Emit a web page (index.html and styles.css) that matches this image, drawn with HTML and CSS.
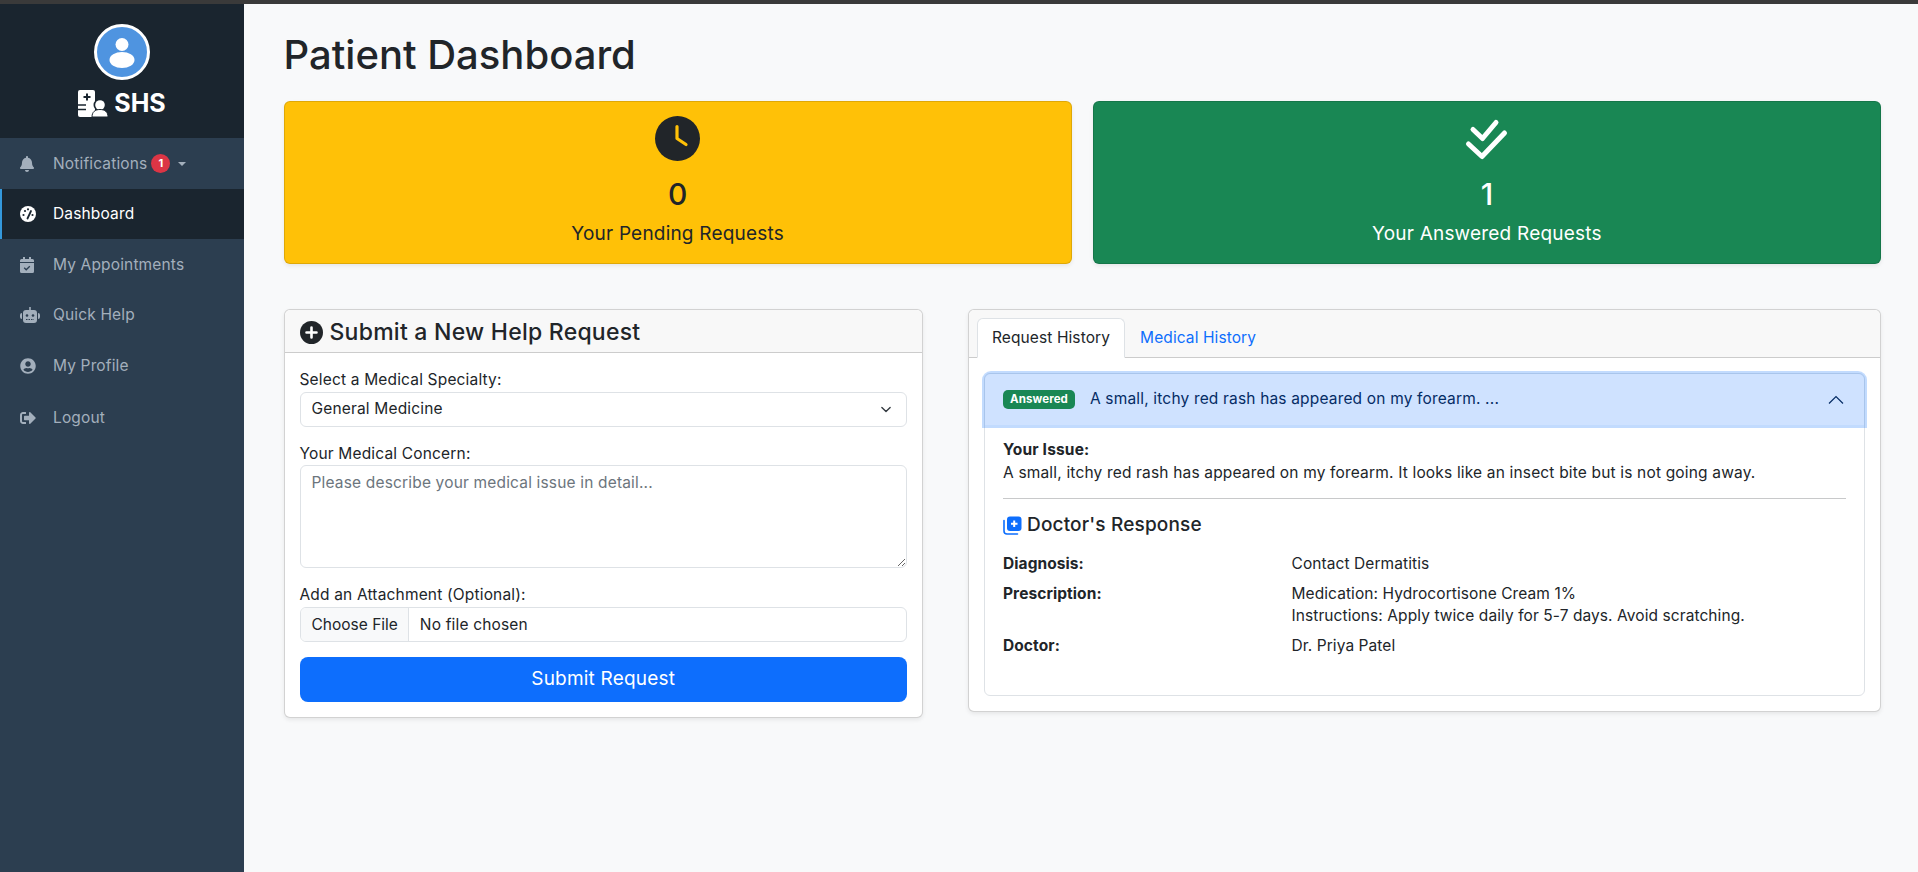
FILE: index.html
```html
<!DOCTYPE html>
<html lang="en">
<head>
    <meta charset="UTF-8" />
    <title>Patient Dashboard</title>
    <link rel="stylesheet" href="styles.css">
</head>
<body>
    <div class="top-strip"></div>
    <div class="layout">
        <aside class="sidebar">
            <div class="sidebar-head">
                <div class="avatar">
                    <svg viewBox="0 0 50 50" width="50" height="50"><circle cx="25" cy="17.5" r="6.5" fill="#fff"/><ellipse cx="25" cy="33" rx="12.5" ry="8" fill="#fff"/></svg>
                </div>
                <div class="brand">
                    <svg viewBox="0 0 30 27" width="30" height="27">
                        <path d="M2 0h13a2 2 0 0 1 2 2v25H2a2 2 0 0 1-2-2V2a2 2 0 0 1 2-2z" fill="#fff"/>
                        <path d="M9 3.5v7M5.5 7h7" stroke="#1a252f" stroke-width="2"/>
                        <path d="M0 15h8M0 19.5h8" stroke="#1a252f" stroke-width="1.5"/>
                        <circle cx="22" cy="15" r="6.5" fill="#1a252f"/>
                        <circle cx="22" cy="15" r="4.8" fill="#fff"/>
                        <path d="M14 27c0-5 3-7.5 8-7.5s8 2.500 8 7.500z" fill="#fff" stroke="#1a252f" stroke-width="1"/>
                    </svg>
                    <span>SHS</span>
                </div>
            </div>
            <nav class="side-nav">
                <a class="nav-item" href="#">
                    <span class="nav-icon"><svg viewBox="0 0 448 512" width="14" height="16"><path fill="currentColor" d="M224 512c35.32 0 63.97-28.65 63.97-64H160.03c0 35.35 28.65 64 63.97 64zm215.39-149.71c-19.32-20.76-55.47-51.99-55.47-154.29 0-77.7-54.48-139.9-127.94-155.16V32c0-17.67-14.32-32-31.98-32s-31.98 14.33-31.98 32v20.84C118.56 68.1 64.08 130.3 64.08 208c0 102.3-36.15 133.53-55.47 154.29-6 6.45-8.66 14.16-8.61 21.71.11 16.4 12.98 32 32.1 32h383.8c19.12 0 32-15.6 32.1-32 .05-7.55-2.61-15.27-8.61-21.71z"/></svg></span>
                    Notifications
                    <span class="count-badge">1</span>
                    <span class="caret"></span>
                </a>
                <a class="nav-item active" href="#">
                    <span class="nav-icon"><svg viewBox="0 0 16 16" width="16" height="16"><circle cx="8" cy="8" r="8" fill="#fff"/><circle cx="3.5" cy="9" r="1.100" fill="#1a252f"/><circle cx="5" cy="5" r="1.100" fill="#1a252f"/><circle cx="8" cy="3.300" r="1.100" fill="#1a252f"/><circle cx="12.500" cy="9" r="1.100" fill="#1a252f"/><path d="M7.500 12.500L11 5" stroke="#1a252f" stroke-width="1.800" stroke-linecap="round"/></svg></span>
                    Dashboard
                </a>
                <a class="nav-item" href="#">
                    <span class="nav-icon"><svg viewBox="0 0 14 16" width="14" height="16"><path fill="currentColor" d="M3 0h2v2h4V0h2v2h1.500A1.500 1.500 0 0 1 14 3.500V5H0V3.500A1.500 1.500 0 0 1 1.500 2H3zM0 6h14v8.500a1.500 1.500 0 0 1-1.500 1.500h-11A1.500 1.500 0 0 1 0 14.500z"/><path d="M4.200 10.800l2 2 3.600-3.600" fill="none" stroke="#2c3e50" stroke-width="1.300"/></svg></span>
                    My Appointments
                </a>
                <a class="nav-item" href="#">
                    <span class="nav-icon"><svg viewBox="0 0 20 16" width="20" height="16"><path fill="currentColor" d="M9.200 0h1.600v3H9.200zM6 3h8a3 3 0 0 1 3 3v7a3 3 0 0 1-3 3H6a3 3 0 0 1-3-3V6a3 3 0 0 1 3-3zM0 8a2 2 0 0 1 2-2v6a2 2 0 0 1-2-2zM18 6a2 2 0 0 1 2 2v2a2 2 0 0 1-2 2z"/><circle cx="7" cy="8.500" r="1.300" fill="#2c3e50"/><circle cx="13" cy="8.500" r="1.300" fill="#2c3e50"/><path d="M6 12.500h8" stroke="#2c3e50" stroke-width="1" stroke-dasharray="1.500 1"/></svg></span>
                    Quick Help
                </a>
                <a class="nav-item" href="#">
                    <span class="nav-icon"><svg viewBox="0 0 496 512" width="16" height="16"><path fill="currentColor" d="M248 8C111 8 0 119 0 256s111 248 248 248 248-111 248-248S385 8 248 8zm0 96c48.600 0 88 39.400 88 88s-39.400 88-88 88-88-39.400-88-88 39.400-88 88-88zm0 344c-58.700 0-111.300-26.600-146.500-68.200 18.800-35.400 55.600-59.800 98.500-59.800 2.400 0 4.800.4 7.100 1.100 13 4.200 26.600 6.900 40.900 6.900 14.300 0 28-2.700 40.900-6.900 2.300-.7 4.700-1.100 7.100-1.100 42.900 0 79.700 24.400 98.500 59.800C359.300 421.400 306.700 448 248 448z"/></svg></span>
                    My Profile
                </a>
                <a class="nav-item nav-logout" href="#">
                    <span class="nav-icon"><svg viewBox="0 0 512 512" width="16" height="16"><path fill="currentColor" d="M497 273L329 441c-15 15-41 4.500-41-17v-96H152c-13.300 0-24-10.700-24-24v-96c0-13.300 10.700-24 24-24h136V88c0-21.400 25.900-32 41-17l168 168c9.300 9.400 9.300 24.600 0 34zM192 436v-40c0-6.600-5.400-12-12-12H96c-17.700 0-32-14.300-32-32V160c0-17.700 14.300-32 32-32h84c6.600 0 12-5.400 12-12V76c0-6.600-5.400-12-12-12H96c-53 0-96 43-96 96v192c0 53 43 96 96 96h84c6.600 0 12-5.400 12-12z"/></svg></span>
                    Logout
                </a>
            </nav>
        </aside>

        <main class="main">
            <h1 class="page-title">Patient Dashboard</h1>

            <div class="stat-row">
                <div class="stat-card stat-pending">
                    <svg viewBox="0 0 45 45" width="45" height="45"><circle cx="22.500" cy="22.500" r="22.500" fill="#212529"/><path d="M22 10.500V22.500L31 28.500" fill="none" stroke="#ffc107" stroke-width="3.200" stroke-linecap="round" stroke-linejoin="round"/></svg>
                    <div class="stat-number">0</div>
                    <div class="stat-label">Your Pending Requests</div>
                </div>
                <div class="stat-card stat-answered">
                    <svg viewBox="0 0 45 45" width="45" height="45"><path d="M9 13.500l9.500 9L32 6.500M4.500 28l13.500 12.500L40.500 17" fill="none" stroke="#fff" stroke-width="5" stroke-linecap="round" stroke-linejoin="round"/></svg>
                    <div class="stat-number">1</div>
                    <div class="stat-label">Your Answered Requests</div>
                </div>
            </div>

            <div class="panel-row">
                <section class="card">
                    <div class="card-head">
                        <h2 class="card-title">
                            <svg viewBox="0 0 23 23" width="23" height="23"><circle cx="11.500" cy="11.500" r="11.500" fill="#212529"/><path d="M11.500 6.500v10M6.500 11.500h10" stroke="#fff" stroke-width="2.600" stroke-linecap="round"/></svg>
                            Submit a New Help Request
                        </h2>
                    </div>
                    <form class="card-body">
                        <div class="form-group">
                            <label for="specialty">Select a Medical Specialty:</label>
                            <select id="specialty" class="form-control form-select">
                                <option>General Medicine</option>
                            </select>
                        </div>
                        <div class="form-group">
                            <label for="concern">Your Medical Concern:</label>
                            <textarea id="concern" class="form-control form-text" placeholder="Please describe your medical issue in detail..."></textarea>
                        </div>
                        <div class="form-group">
                            <label for="attachment">Add an Attachment (Optional):</label>
                            <input id="attachment" type="file" class="form-control form-file" />
                        </div>
                        <button type="button" class="submit-btn">Submit Request</button>
                    </form>
                </section>

                <section class="card">
                    <div class="card-head tabs-head">
                        <a class="tab active" href="#">Request History</a>
                        <a class="tab" href="#">Medical History</a>
                    </div>
                    <div class="card-body">
                        <div class="accordion">
                            <div class="accordion-btn">
                                <span class="status-badge">Answered</span>
                                <span class="accordion-text">A small, itchy red rash has appeared on my forearm. ...</span>
                                <svg class="chevron" viewBox="0 0 16 16" width="16" height="16"><path d="M1 11.500l7-7 7 7" fill="none" stroke="#052c65" stroke-width="1.200"/></svg>
                            </div>
                            <div class="accordion-body">
                                <strong>Your Issue:</strong>
                                <p class="issue-text">A small, itchy red rash has appeared on my forearm. It looks like an insect bite but is not going away.</p>
                                <hr />
                                <h3 class="response-title">
                                    <svg viewBox="0 0 19 19" width="19" height="19"><path d="M1 4.500V15a3 3 0 0 0 3 3h10.500" fill="none" stroke="#0d6efd" stroke-width="1.600" stroke-linecap="round"/><rect x="4" y="0.500" width="14.500" height="14.500" rx="3" fill="#0d6efd"/><path d="M11.200 4.500v6.500M8 7.750h6.500" stroke="#fff" stroke-width="2"/></svg>
                                    Doctor's Response
                                </h3>
                                <dl class="detail-grid">
                                    <dt>Diagnosis:</dt>
                                    <dd>Contact Dermatitis</dd>
                                    <dt>Prescription:</dt>
                                    <dd>Medication: Hydrocortisone Cream 1%<br />Instructions: Apply twice daily for 5-7 days. Avoid scratching.</dd>
                                    <dt>Doctor:</dt>
                                    <dd>Dr. Priya Patel</dd>
                                </dl>
                            </div>
                        </div>
                    </div>
                </section>
            </div>
        </main>
    </div>
</body>
</html>
```

FILE: styles.css
```css
* {
    box-sizing: border-box;
}

body {
    margin: 0;
    font-family: Inter, 'Noto Sans', sans-serif;
    font-size: 15.5px;
    letter-spacing: .17px;
    line-height: 22.5px;
    color: #212529;
    background-color: #f8f9fa;
}

.top-strip {
    height: 4px;
    background-color: #3a3a3a;
}

.layout {
    display: flex;
    height: 868px;
}

/* sidebar */
.sidebar {
    width: 244px;
    flex-shrink: 0;
    background-color: #2c3e50;
}

.sidebar-head {
    height: 134px;
    padding-top: 20px;
    background-color: #1a252f;
    display: flex;
    flex-direction: column;
    align-items: center;
}

.avatar {
    width: 56px;
    height: 56px;
    border: 3px solid #fff;
    border-radius: 50%;
    background-color: #4f94e0;
}

.avatar svg {
    display: block;
}

.brand {
    display: flex;
    align-items: center;
    gap: 6px;
    margin-top: 10px;
    color: #fff;
    font-size: 25px;
    font-weight: 700;
    letter-spacing: 0;
    line-height: 27px;
}

.nav-item {
    display: flex;
    align-items: center;
    height: 50.5px;
    padding-left: 20px;
    padding-top: 1px;
    color: #a3afbc;
    font-size: 15.5px;
    letter-spacing: .15px;
    text-decoration: none;
}

.nav-item.active {
    padding-left: 18px;
    padding-top: 0;
    border-left: 2px solid #3498db;
    background-color: #1a252f;
    color: #fff;
}

.nav-logout {
    height: 52.5px;
    padding-top: 2px;
}

.nav-icon {
    width: 33px;
    display: flex;
    align-items: center;
}

.count-badge {
    width: 19px;
    height: 19px;
    margin-left: 4px;
    border-radius: 50%;
    background-color: #dc3545;
    color: #fff;
    font-size: 11px;
    font-weight: 700;
    letter-spacing: 0;
    line-height: 19px;
    text-align: center;
}

.caret {
    margin-left: 8px;
    border-top: 4.500px solid;
    border-left: 4.500px solid transparent;
    border-right: 4.500px solid transparent;
}

/* main */
.main {
    flex: 1;
    padding: 21px 37px 0 39.5px;
}

.page-title {
    margin: 0 0 16px;
    font-size: 40px;
    font-weight: 500;
    letter-spacing: 0;
    line-height: 60px;
}

.stat-row {
    display: grid;
    grid-template-columns: 1fr 1fr;
    gap: 21px;
    margin-bottom: 45px;
}

.stat-card {
    height: 163px;
    padding-top: 14px;
    border: 1px solid rgba(0, 0, 0, .125);
    border-radius: 6px;
    box-shadow: 0 2px 4px rgba(0, 0, 0, .075);
    text-align: center;
}

.stat-card svg {
    display: block;
    margin: 0 auto;
}

.stat-pending {
    background-color: #ffc107;
}

.stat-answered {
    background-color: #198754;
    color: #fff;
}

.stat-number {
    margin-top: 12px;
    font-size: 30px;
    font-weight: 500;
    letter-spacing: 0;
    line-height: 42px;
}

.stat-label {
    margin-top: 5px;
    font-size: 19px;
    letter-spacing: .2px;
    line-height: 27px;
}

.panel-row {
    display: grid;
    grid-template-columns: 639.5px 1fr;
    gap: 45px;
    align-items: start;
}

.card {
    background-color: #fff;
    border: 1px solid rgba(0, 0, 0, .175);
    border-radius: 6px;
    box-shadow: 0 2px 4px rgba(0, 0, 0, .075);
}

.card-head {
    background-color: #f8f8f8;
    border-bottom: 1px solid rgba(0, 0, 0, .175);
    border-radius: 6px 6px 0 0;
}

.card-title {
    display: flex;
    align-items: center;
    gap: 7px;
    height: 42px;
    margin: 0;
    padding: 2px 0 0 15px;
    font-size: 23px;
    font-weight: 500;
    letter-spacing: .25px;
}

.card-body {
    display: block;
    padding: 15px;
}

/* form */
.form-group {
    margin-bottom: 15px;
}

.form-group label {
    display: block;
    padding-top: 1px;
}

.form-control {
    display: block;
    width: 100%;
    font: inherit;
    letter-spacing: inherit;
    color: #212529;
    background-color: #fff;
    border: 1px solid #dee2e6;
    border-radius: 6px;
}

.form-select {
    height: 35px;
    padding: 0 36px 0 11px;
    appearance: none;
    background-image: url("data:image/svg+xml,%3csvg xmlns='http://www.w3.org/2000/svg' viewBox='0 0 16 16'%3e%3cpath fill='none' stroke='%23343a40' stroke-linecap='round' stroke-linejoin='round' stroke-width='2' d='m2 5 6 6 6-6'/%3e%3c/svg%3e");
    background-repeat: no-repeat;
    background-position: right 13px center;
    background-size: 14px 11px;
}

.form-text {
    height: 103px;
    padding: 6px 11px;
}

.form-text::placeholder {
    color: #6c757d;
}

.form-file {
    height: 35px;
    padding: 0 11px 0 0;
    line-height: 33px;
}

.form-file::file-selector-button {
    height: 33px;
    margin-right: 11px;
    padding: 0 10px 0 11px;
    font: inherit;
    letter-spacing: 0;
    color: #212529;
    background-color: #f8f9fa;
    border: 0;
    border-right: 1px solid #dee2e6;
}

.submit-btn {
    display: block;
    width: 100%;
    height: 45px;
    font: inherit;
    font-size: 19px;
    letter-spacing: .2px;
    color: #fff;
    background-color: #0d6efd;
    border: 0;
    border-radius: 8px;
}

/* tabs + accordion */
.tabs-head {
    display: flex;
    height: 48px;
    padding: 8px 8px 0;
}

.tab {
    height: 40px;
    padding: 8px 14px;
    color: #0d6efd;
    letter-spacing: .1px;
    text-decoration: none;
    border: 1px solid transparent;
    border-radius: 6px 6px 0 0;
}

.tab.active {
    color: #212529;
    background-color: #fff;
    border-color: #dee2e6 #dee2e6 #fff;
}

.accordion {
    border: 1px solid #dee2e6;
    border-radius: 6px;
}

.accordion-btn {
    display: flex;
    align-items: center;
    height: 51px;
    padding: 0 20px 0 18px;
    color: #052c65;
    background-color: #cfe2ff;
    border-radius: 6px 6px 0 0;
    box-shadow: 0 0 0 3px rgba(13, 110, 253, .25);
}

.status-badge {
    padding: 0 7px;
    height: 19px;
    margin-right: 15px;
    color: #fff;
    background-color: #198754;
    border-radius: 5px;
    font-size: 11.5px;
    font-weight: 700;
    letter-spacing: .1px;
    line-height: 19px;
}

.accordion-text {
    flex: 1;
}

.accordion-body {
    padding: 14px 18px 38px;
}

.accordion-body strong {
    display: block;
    font-weight: 700;
}

.issue-text {
    margin: 0;
}

.accordion-body hr {
    height: 1px;
    margin: 14px 0 0;
    border: 0;
    background-color: #c8c9ca;
}

.response-title {
    display: flex;
    align-items: center;
    gap: 5px;
    margin: 12px 0 14px;
    font-size: 19px;
    font-weight: 500;
    line-height: 28px;
}

.detail-grid {
    display: grid;
    grid-template-columns: 288.5px 1fr;
    row-gap: 7px;
    margin: 0;
    letter-spacing: .08px;
}

.detail-grid dt {
    font-weight: 700;
}

.detail-grid dd {
    margin: 0;
}
```
